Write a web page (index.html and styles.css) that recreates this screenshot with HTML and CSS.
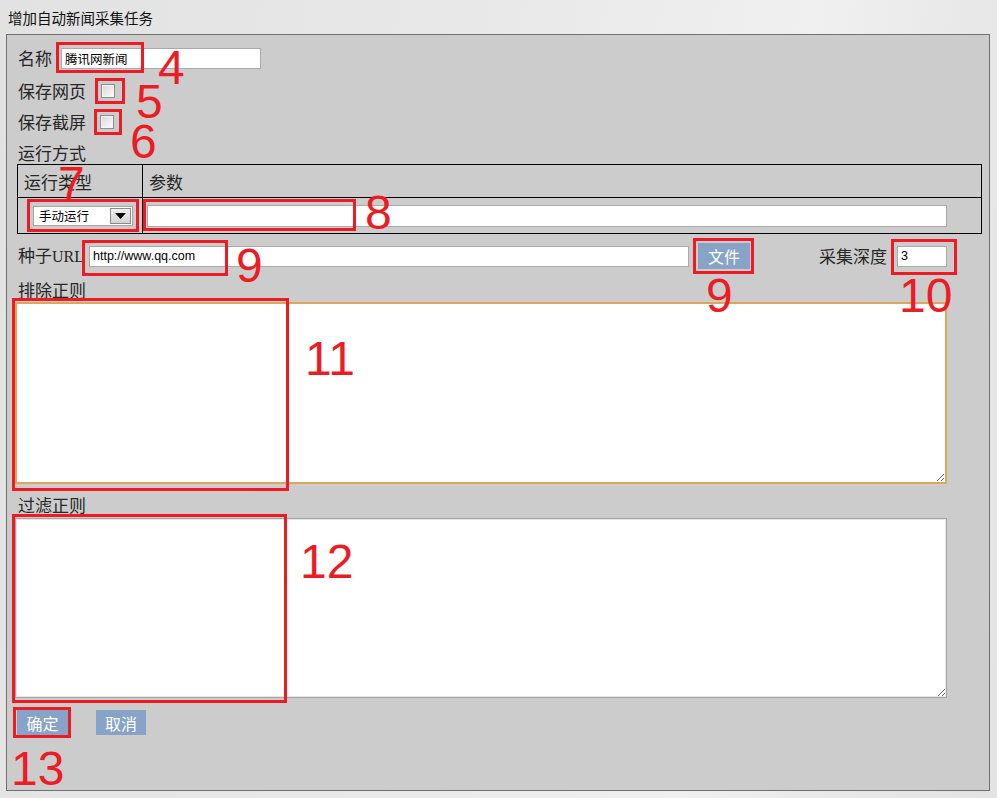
FILE: index.html
```html
<!DOCTYPE html>
<html lang="zh">
<head>
<meta charset="utf-8">
<title>增加自动新闻采集任务</title>
<link rel="stylesheet" href="styles.css">
</head>
<body>
<div class="window">
  <div class="titlebar">增加自动新闻采集任务</div>
  <div class="panel">
    <div class="row r-name">
      <span class="lbl">名称</span>
      <input class="field name-field" type="text" value="腾讯网新闻">
    </div>
    <div class="row r-chk1">
      <span class="lbl">保存网页</span>
      <span class="checkbox"></span>
    </div>
    <div class="row r-chk2">
      <span class="lbl">保存截屏</span>
      <span class="checkbox"></span>
    </div>
    <div class="row r-mode">
      <span class="lbl">运行方式</span>
    </div>
    <table class="mode-table">
      <tr class="head">
        <td class="c1">运行类型</td>
        <td class="c2">参数</td>
      </tr>
      <tr class="body">
        <td class="c1">
          <div class="select">
            <span class="select-text">手动运行</span>
            <span class="select-btn"><svg width="11" height="6" viewBox="0 0 11 6"><path d="M0 0H11L5.5 6Z" fill="#000"/></svg></span>
          </div>
        </td>
        <td class="c2"><input class="field param-field" type="text" value=""></td>
      </tr>
    </table>
    <div class="row r-url">
      <span class="lbl">种子<span class="latin">URL</span></span>
      <input class="field url-field" type="text" value="http://www.qq.com">
      <span class="btn file-btn">文件</span>
      <span class="lbl depth-lbl">采集深度</span>
      <input class="field depth-field" type="text" value="3">
    </div>
    <div class="row r-exclude"><span class="lbl">排除正则</span></div>
    <textarea class="area area-focus"></textarea>
    <div class="row r-filter"><span class="lbl">过滤正则</span></div>
    <textarea class="area area-plain"></textarea>
    <div class="row r-btns">
      <span class="btn ok-btn">确定</span>
      <span class="btn cancel-btn">取消</span>
    </div>
  </div>
</div>

<div class="marks">
  <div class="box b4"></div><div class="num n4">4</div>
  <div class="box b5"></div><div class="num n5">5</div>
  <div class="box b6"></div><div class="num n6">6</div>
  <div class="box b7"></div><div class="num n7">7</div>
  <div class="box b8"></div><div class="num n8">8</div>
  <div class="box b9a"></div><div class="num n9a">9</div>
  <div class="box b9b"></div><div class="num n9b">9</div>
  <div class="box b10"></div><div class="num n10">10</div>
  <div class="box b11"></div><div class="num n11">11</div>
  <div class="box b12"></div><div class="num n12">12</div>
  <div class="box b13"></div><div class="num n13">13</div>
</div>
</body>
</html>
```

FILE: styles.css
```css
html, body {
  margin: 0;
  padding: 0;
}
body {
  position: relative;
  width: 997px;
  height: 798px;
  overflow: hidden;
  background: linear-gradient(100deg, #e2e2e2 0%, #e9e9e9 45%, #f0f0f0 72%, #e8e8e8 86%, #e3e3e3 100%);
  font-family: "Noto Sans CJK SC", "Liberation Sans", sans-serif;
  color: #1e1e1e;
}
.window {
  width: 997px;
  height: 798px;
}
.titlebar {
  height: 34px;
  padding-left: 8px;
  font-size: 14.5px;
  line-height: 35px;
  color: #111;
}
.panel {
  box-sizing: border-box;
  margin-left: 6px;
  width: 984px;
  height: 757px;
  border: 1px solid #707070;
  background: #cccccc;
  padding: 0 0 0 11px;
}
.row {
  display: flex;
  align-items: center;
}
.lbl {
  font-size: 17px;
  line-height: 20px;
  color: #262626;
  white-space: nowrap;
}
.latin {
  font-family: "Liberation Serif", serif;
  font-size: 16px;
}
.field {
  box-sizing: border-box;
  margin: 0;
  border: 1px solid #aaaaaa;
  background: #fff;
  font-family: "Liberation Sans", "Noto Sans CJK SC", sans-serif;
  font-size: 12.5px;
  color: #000;
  padding: 0 3px;
  outline: none;
}
.r-name {
  margin-top: 7px;
  height: 32px;
}
.name-field {
  margin-left: 9px;
  width: 200px;
  height: 21px;
  font-family: "Noto Sans CJK SC", sans-serif;
  font-size: 12.5px;
}
.r-chk1 { height: 34px; }
.r-chk2 { height: 28px; }
.checkbox {
  box-sizing: border-box;
  width: 14px;
  height: 14px;
  margin-left: 15px;
  border: 1px solid #8e8e8e;
  background: linear-gradient(135deg, #d8d8d8 0%, #eeeeee 60%, #fafafa 100%);
  box-shadow: inset 0 0 0 1px #f4f4f4;
}
.r-chk2 .checkbox { margin-left: 14px; }
.r-mode {
  height: 28px;
  padding-top: 5px;
  box-sizing: border-box;
}
.mode-table {
  margin-left: -1px;
  width: 965px;
  border-collapse: collapse;
  border: 1px solid #000;
}
.mode-table td {
  border: 1px solid #000;
  padding: 0;
  vertical-align: middle;
}
.mode-table .c1 { width: 118px; }
.head td {
  height: 32px;
  font-size: 17px;
  color: #262626;
  padding-left: 6px;
}
.body td { height: 35px; }
.select {
  box-sizing: border-box;
  margin-left: 15px;
  width: 100px;
  height: 20px;
  border: 1px solid #a4a4a4;
  background: #fff;
  display: flex;
  align-items: center;
  justify-content: space-between;
  padding: 0 1px 0 5px;
}
.select-text {
  font-size: 12.5px;
  color: #000;
}
.select-btn {
  box-sizing: border-box;
  width: 21px;
  height: 16px;
  border: 1px solid #8a8a8a;
  background: linear-gradient(#f2f2f2, #d2d2d2);
  display: flex;
  align-items: center;
  justify-content: center;
}
.param-field {
  margin-left: 4px;
  width: 800px;
  height: 22px;
  display: block;
}
.r-url {
  height: 44px;
}
.url-field {
  margin-left: 5px;
  width: 600px;
  height: 21px;
}
.btn {
  box-sizing: border-box;
  display: inline-flex;
  align-items: center;
  justify-content: center;
  background: #87a3c8;
  color: #fff;
  font-size: 16px;
  line-height: 20px;
}
.file-btn {
  margin-left: 9px;
  width: 52px;
  height: 26px;
}
.depth-lbl { margin-left: 69px; }
.depth-field {
  margin-left: 10px;
  width: 50px;
  height: 21px;
}
.r-exclude { height: 24px; }
.area {
  display: block;
  box-sizing: border-box;
  margin: 0 0 0 -3px;
  width: 932px;
  background: #fff;
  resize: both;
  outline: none;
  padding: 2px;
  font-family: "Liberation Sans", sans-serif;
}
.area-focus {
  height: 182px;
  border: 2px solid #dba75c;
}
.r-filter {
  height: 34px;
  align-items: flex-end;
  padding-bottom: 3px;
  box-sizing: border-box;
}
.area-plain {
  height: 180px;
  border: 1px solid #a6a6a6;
  box-shadow: inset 0 0 0 1px #e6e6e6;
}
.r-btns {
  margin-top: 12px;
  height: 25px;
}
.ok-btn {
  margin-left: -1px;
  width: 51px;
  height: 25px;
}
.cancel-btn {
  margin-left: 28px;
  width: 50px;
  height: 25px;
}

/* annotation overlay */
.marks {
  position: absolute;
  left: 0;
  top: 0;
  width: 997px;
  height: 798px;
  pointer-events: none;
}
.box {
  position: absolute;
  box-sizing: border-box;
  border: 3px solid #ed1c24;
}
.num {
  position: absolute;
  font-family: "Liberation Sans", sans-serif;
  font-size: 48px;
  line-height: 1;
  color: #ed1c24;
}
.b4 { left: 56px; top: 42px; width: 88px; height: 31px; }
.n4 { left: 158px; top: 44px; }
.b5 { left: 95px; top: 78px; width: 30px; height: 26px; }
.n5 { left: 136px; top: 78px; }
.b6 { left: 94px; top: 109px; width: 28px; height: 26px; }
.n6 { left: 130px; top: 118px; }
.b7 { left: 27px; top: 199px; width: 112px; height: 33px; }
.n7 { left: 58px; top: 160px; }
.b8 { left: 143px; top: 199px; width: 213px; height: 32px; }
.n8 { left: 365px; top: 189px; }
.b9a { left: 82px; top: 240px; width: 146px; height: 36px; }
.n9a { left: 236px; top: 242px; }
.b9b { left: 693px; top: 238px; width: 61px; height: 36px; }
.n9b { left: 706px; top: 272px; }
.b10 { left: 891px; top: 239px; width: 66px; height: 36px; }
.n10 { left: 899px; top: 272px; }
.b11 { left: 12px; top: 298px; width: 277px; height: 193px; }
.n11 { left: 305px; top: 335px; }
.b12 { left: 12px; top: 514px; width: 275px; height: 189px; }
.n12 { left: 300px; top: 538px; }
.b13 { left: 13px; top: 707px; width: 58px; height: 31px; }
.n13 { left: 11px; top: 745px; }
```
